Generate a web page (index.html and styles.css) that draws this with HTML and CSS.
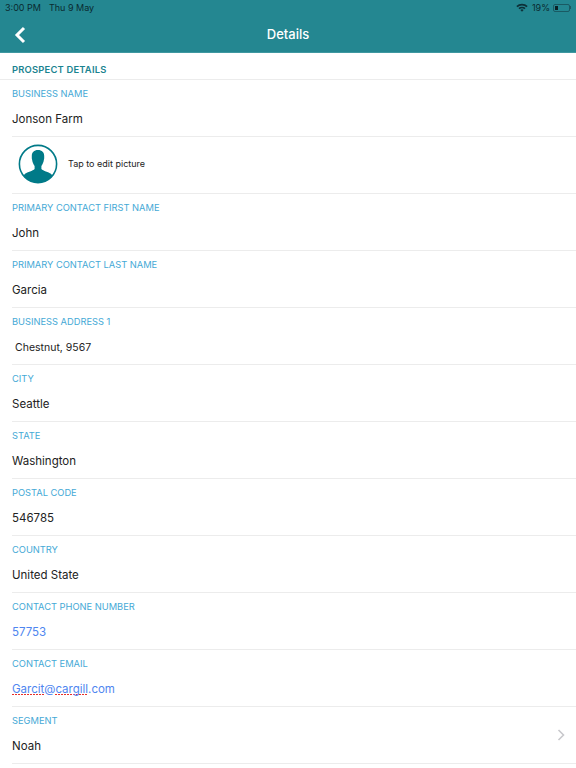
FILE: index.html
```html
<!DOCTYPE html>
<html>
	<head>
		<link rel="stylesheet" href="styles.css">
	</head>
	<body>
		<div id="header">
			<div id="statusBar">
				<span class="time">3:00 PM</span>
				<span class="date">Thu 9 May</span>
				<span class="spacer"></span>
				<svg class="wifi" width="12" height="9" viewBox="0 0 12 9">
					<path d="M0.3 3 A8.2 8.2 0 0 1 11.7 3 L10.5 4.2 A6.5 6.5 0 0 0 1.5 4.2 Z" fill="#0d3038"/>
					<path d="M2.4 5.1 A5.2 5.2 0 0 1 9.6 5.1 L8.4 6.3 A3.5 3.5 0 0 0 3.6 6.3 Z" fill="#0d3038"/>
					<path d="M4.4 7.1 A2.3 2.3 0 0 1 7.6 7.1 L6 8.8 Z" fill="#0d3038"/>
				</svg>
				<span class="battery-text">19%</span>
				<div class="battery">
					<div class="battery-level"></div>
				</div>
				<div class="battery-tip"></div>
			</div>
			<div id="navBar">
				<svg class="back" width="12" height="18" viewBox="0 0 12 18">
					<path d="M10 2 L3 9 L10 16" fill="none" stroke="#fff" stroke-width="3"/>
				</svg>
				<h1>Details</h1>
			</div>
		</div>

		<div id="details">
			<h2>PROSPECT DETAILS</h2>

			<div class="row">
				<label>BUSINESS NAME</label>
				<p>Jonson Farm</p>
			</div>

			<div class="row picture">
				<svg class="avatar" width="40" height="40" viewBox="0 0 40 40">
					<defs>
						<clipPath id="circle"><circle cx="20" cy="20" r="18.6"/></clipPath>
					</defs>
					<circle cx="20" cy="20" r="18.6" fill="#fff" stroke="#007a88" stroke-width="1.6"/>
					<g clip-path="url(#circle)" fill="#007a88">
						<path d="M20 6 C16 6 13.8 8.5 13.8 12 C13.8 13.5 13.7 14.8 14.1 15.8 C14.5 18.5 15.5 20.5 16.6 22 L16.6 25 C14.8 27 9.5 28 7 29.8 C5.5 31.2 4.5 34 4 40 L36 40 C35.5 34 34.5 31.2 33 29.8 C30.5 28 25.2 27 23.4 25 L23.4 22 C24.5 20.5 25.5 18.5 25.9 15.8 C26.3 14.8 26.2 13.5 26.2 12 C26.2 8.5 24 6 20 6 Z"/>
					</g>
				</svg>
				<span>Tap to edit picture</span>
			</div>

			<div class="row">
				<label>PRIMARY CONTACT FIRST NAME</label>
				<p>John</p>
			</div>

			<div class="row">
				<label>PRIMARY CONTACT LAST NAME</label>
				<p>Garcia</p>
			</div>

			<div class="row">
				<label>BUSINESS ADDRESS 1</label>
				<p class="address">Chestnut, 9567</p>
			</div>

			<div class="row">
				<label>CITY</label>
				<p>Seattle</p>
			</div>

			<div class="row">
				<label>STATE</label>
				<p>Washington</p>
			</div>

			<div class="row">
				<label>POSTAL CODE</label>
				<p>546785</p>
			</div>

			<div class="row">
				<label>COUNTRY</label>
				<p>United State</p>
			</div>

			<div class="row">
				<label>CONTACT PHONE NUMBER</label>
				<p class="link">57753</p>
			</div>

			<div class="row">
				<label>CONTACT EMAIL</label>
				<p class="link"><span class="typo">Garcit</span>@<span class="typo">cargill</span>.com</p>
			</div>

			<div class="row select">
				<div>
					<label>SEGMENT</label>
					<p>Noah</p>
				</div>
				<svg class="chevron" width="8" height="12" viewBox="0 0 8 12">
					<path d="M1.5 1 L6.5 6 L1.5 11" fill="none" stroke="#c8c8cc" stroke-width="1.6"/>
				</svg>
			</div>
		</div>
	</body>
</html>
```

FILE: styles.css
```css
* {
	box-sizing: border-box;
}

html, body {
	margin: 0;
	height: 768px;
	overflow: hidden;
}

body {
	background: #fff;
	font-family: Inter, "Liberation Sans", sans-serif;
	color: #222;
}

#header {
	background: #248791;
	height: 53px;
	border-bottom: 1px solid #3f98a1;
}

#statusBar {
	height: 15px;
	padding: 0 5px 0 5px;
	display: flex;
	align-items: center;
	font-size: 9px;
	color: #0a2a30;
}

.time {
	margin-right: 8px;
}

.spacer {
	flex: 1;
}

.wifi {
	margin-right: 4px;
}

.battery-text {
	margin-right: 3px;
}

.battery {
	width: 17px;
	height: 8px;
	border: 1px solid #1a5a63;
	border-radius: 2px;
	padding: 1px;
}

.battery-level {
	width: 3px;
	height: 100%;
	background: #0a1f24;
}

.battery-tip {
	width: 1px;
	height: 3px;
	background: #1a5a63;
}

#navBar {
	height: 37px;
	position: relative;
	display: flex;
	align-items: center;
	justify-content: center;
}

#navBar h1 {
	margin: 0;
	font-size: 13px;
	font-weight: 500;
	color: #fff;
}

.back {
	position: absolute;
	left: 14px;
	top: 11px;
}

#details h2 {
	margin: 0;
	height: 27px;
	padding: 11px 12px 0;
	font-size: 9.4px;
	line-height: 12px;
	font-weight: 600;
	letter-spacing: 0.2px;
	color: #1a8390;
	border-bottom: 1px solid #ececec;
}

.row {
	height: 57px;
	margin-left: 12px;
	padding-top: 8px;
	border-bottom: 1px solid #ececec;
}

.row label {
	display: block;
	font-size: 9.3px;
	line-height: 12px;
	color: #45a9d6;
}

.row p {
	margin: 11px 0 0;
	font-size: 11.5px;
	line-height: 16px;
	color: #222;
}

.row p.address {
	margin: 12px 0 0 3px;
	font-size: 10.5px;
}

.row p.link {
	color: #4f86f0;
}

.typo {
	background: repeating-linear-gradient(90deg, #e8302a 0 2px, transparent 2px 3px) 0 calc(100% - 1px) / 100% 1px no-repeat;
}

.picture {
	display: flex;
	align-items: center;
	gap: 10px;
	padding: 0 0 3px 6px;
	font-size: 9px;
}

.select {
	display: flex;
	justify-content: space-between;
	align-items: center;
	padding-top: 0;
	padding-right: 11px;
}

.select > div {
	padding-top: 8px;
	height: 100%;
}
```
